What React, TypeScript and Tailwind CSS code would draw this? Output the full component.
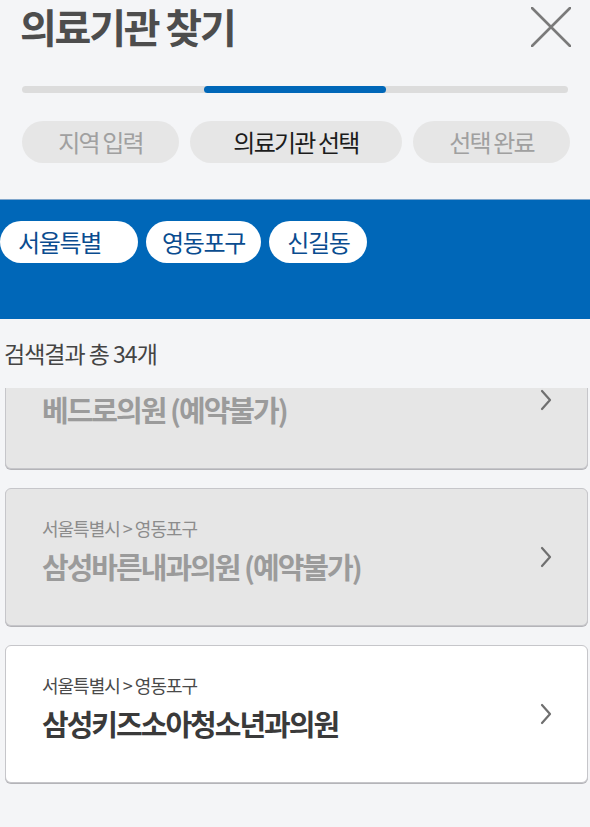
const FONT = "font-['Noto_Sans_CJK_KR','Noto_Sans',sans-serif]";

const steps = [
  { label: "지역 입력", active: false },
  { label: "의료기관 선택", active: true },
  { label: "선택 완료", active: false },
];

const chips = [
  { label: "서울특별", cls: "w-[138px] pl-[18px]" },
  { label: "영동포구", cls: "px-[16px]" },
  { label: "신길동", cls: "px-[18px]" },
];

interface Clinic {
  region?: string;
  name: string;
  disabled?: boolean;
}

// first card is scrolled partly out of view, its region line is hidden
const clinics: Clinic[] = [
  { name: "베드로의원 (예약불가)", disabled: true },
  { region: "서울특별시 > 영동포구", name: "삼성바른내과의원 (예약불가)", disabled: true },
  { region: "서울특별시 > 영동포구", name: "삼성키즈소아청소년과의원" },
];

function Chevron() {
  return (
    <svg width="12" height="22" viewBox="0 0 12 22" fill="none">
      <path d="M2 2 L10 11 L2 20" stroke="#6f6f6f" strokeWidth="2.2" strokeLinecap="round" strokeLinejoin="round" />
    </svg>
  );
}

function ClinicCard({ clinic }: { clinic: Clinic }) {
  const d = clinic.disabled;
  return (
    <div
      className={`relative h-[138px] rounded-[6px] border border-[#c6c6ca] shadow-[0_1px_0_#b4b4b8] ${
        d ? "bg-[#e6e6e6]" : "bg-white"
      }`}
    >
      <div className="pl-[36px] pt-[24px]">
        <div className={`h-[30px] text-[18px] leading-[30px] tracking-[-1px] ${d ? "text-[#8c8c8c]" : "text-[#4a4a4a]"}`}>
          {clinic.region}
        </div>
        <div className={`mt-[2px] text-[29px] font-bold leading-[42px] tracking-[-2px] ${d ? "text-[#9b9b9b]" : "text-[#3a3a3a]"}`}>
          {clinic.name}
        </div>
      </div>
      <div className="absolute right-[35px] top-[57px]">
        <Chevron />
      </div>
    </div>
  );
}

export default function App() {
  return (
    <div className={`${FONT} h-[827px] w-[590px] overflow-hidden bg-[#f4f5f7]`}>
      {/* Header */}
      <div className="flex h-[60px] items-start justify-between px-[20px]">
        <h1 className="pr-[6px] text-[40px] font-bold leading-[52px] tracking-[-2.2px] text-[#4d4d4d]">의료기관 찾기</h1>
        <button className="mt-[7px] mr-[-1px]">
          <svg width="40" height="40" viewBox="0 0 40 40">
            <path d="M1 1 L39 39 M39 1 L1 39" stroke="#7a7a7a" strokeWidth="2.6" strokeLinecap="round" />
          </svg>
        </button>
      </div>

      {/* Progress */}
      <div className="mx-[22px] mt-[26px] grid h-[7px] grid-cols-3 rounded-full bg-[#dcdcdc]">
        <div />
        <div className="rounded-full bg-[#0067b8]" />
        <div />
      </div>

      {/* Steps */}
      <div className="mt-[28px] grid grid-cols-[157px_212px_157px] gap-[11px] px-[22px]">
        {steps.map((s) => (
          <div
            key={s.label}
            className={`flex h-[42px] items-center justify-center rounded-full bg-[#e6e6e6] text-[24px] leading-[42px] tracking-[-1.8px] ${
              s.active ? "text-[#1c1c1c]" : "text-[#a0a0a0]"
            }`}
          >
            {s.label}
          </div>
        ))}
      </div>

      {/* Region chips */}
      <div className="mt-[36px] h-[120px] border-t border-[#7fa6cc] bg-[#0067b8] pt-[21px]">
        <div className="flex gap-[8px]">
          {chips.map((c) => (
            <div
              key={c.label}
              className={`flex h-[42px] items-center rounded-full bg-white text-[24px] leading-[42px] tracking-[-1.3px] text-[#0a4c8f] ${c.cls}`}
            >
              {c.label}
            </div>
          ))}
        </div>
      </div>

      {/* Count */}
      <div className="h-[69px] pl-[4px] pt-[16px] text-[23px] leading-[36px] tracking-[-1px] text-[#444]">
        검색결과 총 34개
      </div>

      {/* List */}
      <div className="h-[440px] overflow-hidden pl-[5px] pr-[2px]">
        <div className="-mt-[57px] flex flex-col gap-[19px]">
          {clinics.map((c) => (
            <ClinicCard key={c.name} clinic={c} />
          ))}
        </div>
      </div>
    </div>
  );
}
